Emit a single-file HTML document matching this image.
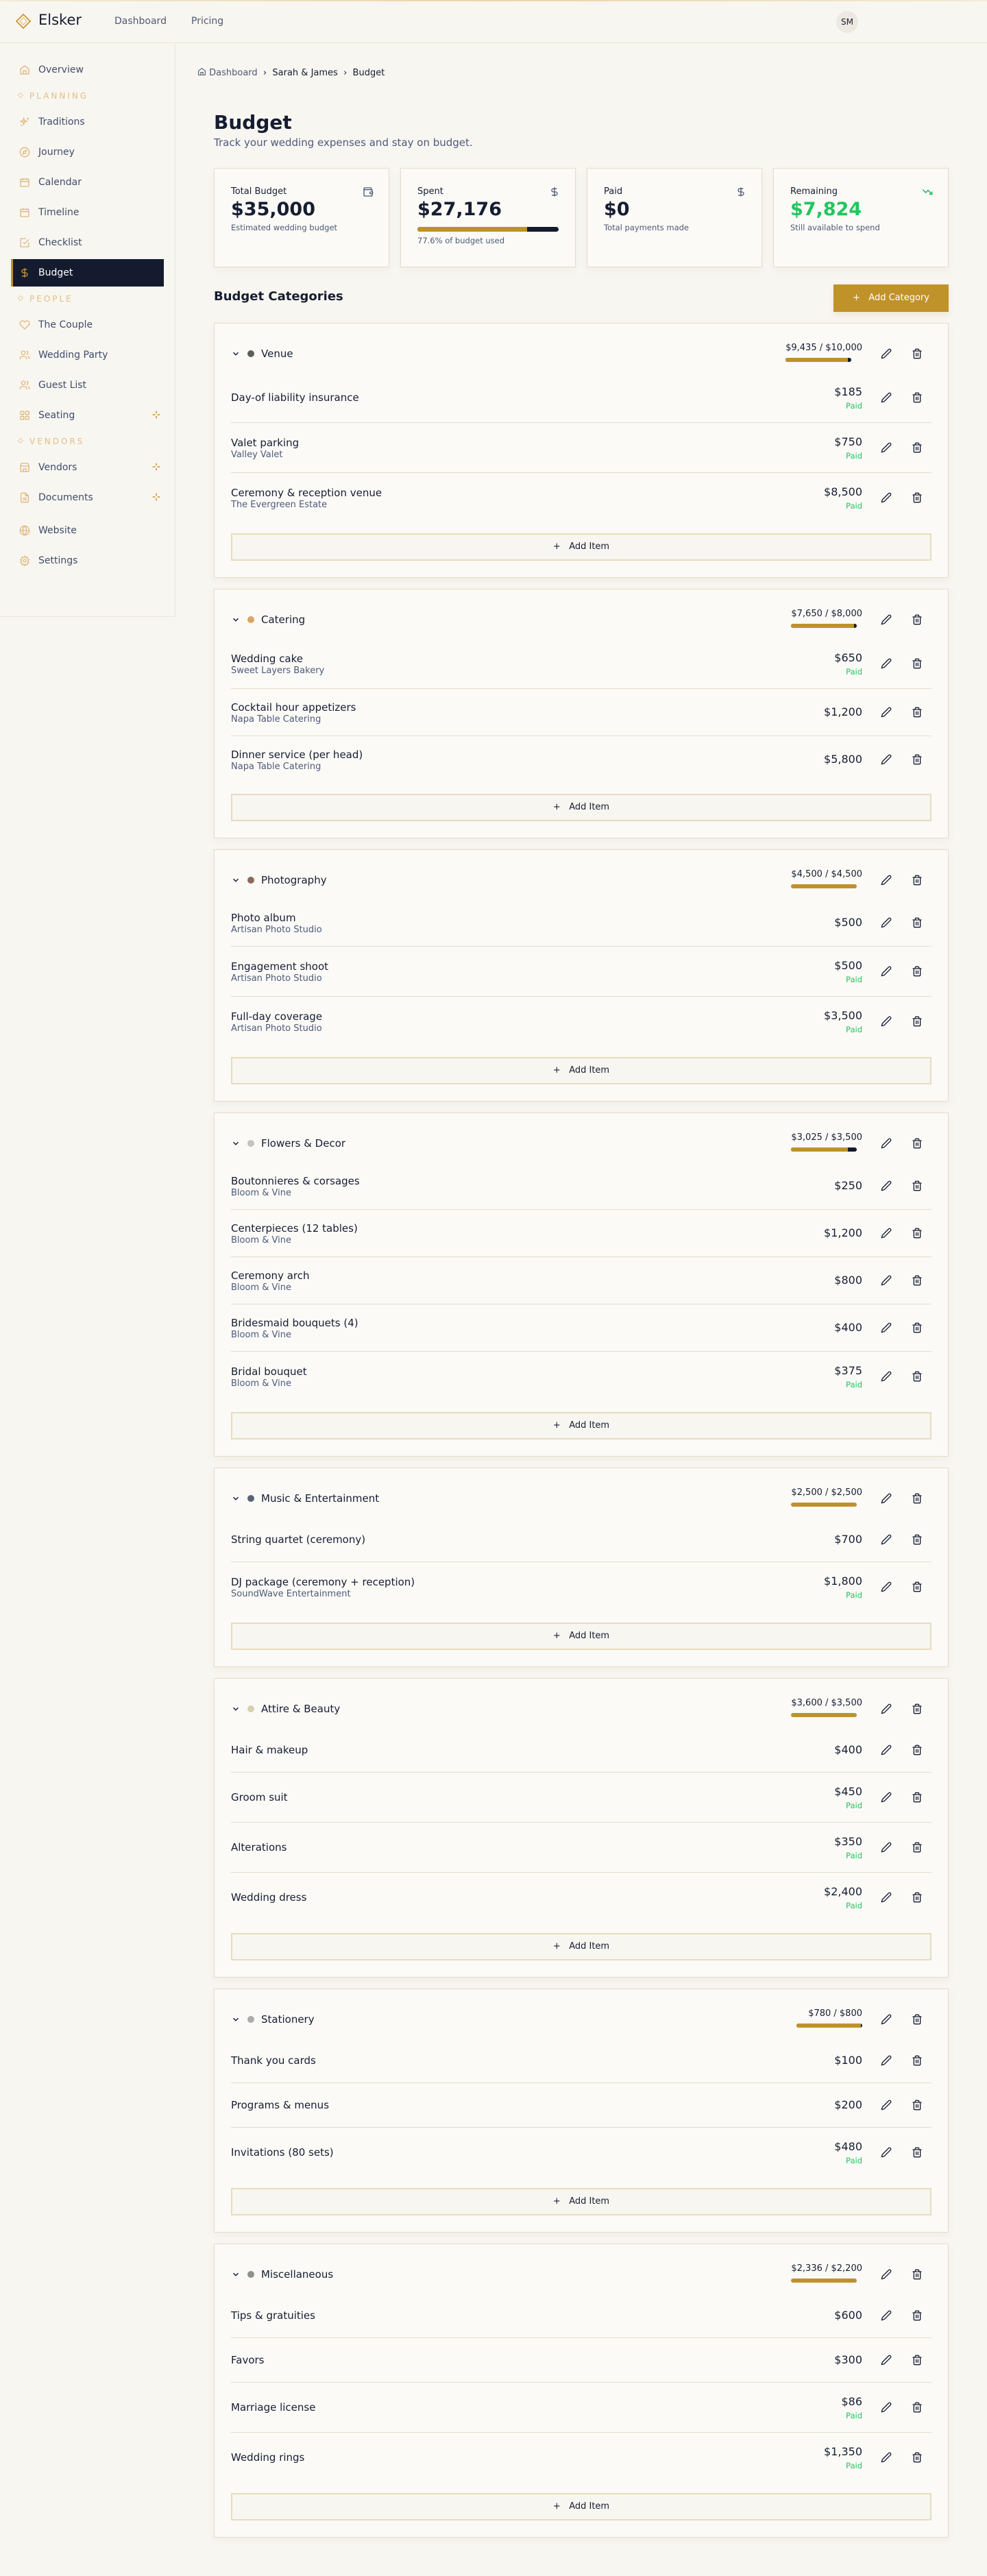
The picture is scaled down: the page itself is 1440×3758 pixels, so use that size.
<!DOCTYPE html>
<html><head><meta charset="utf-8"><style>
*{box-sizing:border-box;margin:0;padding:0}
body{width:1440px;height:3758px;background:#f8f6f1;font-family:"DejaVu Sans","Liberation Sans",sans-serif;color:#161d31;position:relative;overflow:hidden}
.topline{position:absolute;left:0;top:0;width:1440px;height:2px;background:linear-gradient(90deg,#f3ead6,#e9d6a8,#f3ead6)}
header{position:absolute;left:0;top:0;width:1440px;height:63px;border-bottom:1px solid #ebe4d4;background:#f8f6f1}
.logo{position:absolute;left:23px;top:20px}
.brand{position:absolute;left:56px;top:17px;font-size:21px;color:#161d31}
.nav{position:absolute;top:23px;font-size:14px;color:#4d5a72}
.avatar{position:absolute;left:1220px;top:16px;width:32px;height:32px;border-radius:50%;background:#ede9e1;font-size:12px;text-align:center;line-height:32px;color:#161d31}
aside{position:absolute;left:0;top:64px;width:256px;height:836px;border-right:1px solid #ece7dc;border-bottom:1px solid #ece7dc}
.it{position:absolute;left:16px;width:223px;height:40px;font-size:14px;color:#3f4d69;line-height:40px;padding-left:40px}
.it svg{position:absolute;left:12px;top:12px}
.it.act{background:#141b2e;color:#fff;border-left:3px solid #c0922a;padding-left:37px}
.it.act svg{left:9px}
.lbl{position:absolute;left:27px;font-size:12px;letter-spacing:3px;color:#e1bf85;line-height:16px}
.lbl b{display:inline-block;width:6px;height:6px;border:1px solid #e8cfa0;transform:rotate(45deg);margin-right:10px;vertical-align:2px}
.spark{position:absolute;left:205px;top:13px}
.crumb{position:absolute;left:288px;top:98px;font-size:13px;color:#161d31}
.crumb .g{color:#4d5a72}
h1{position:absolute;left:312px;top:162px;font-size:28px;font-weight:bold;color:#161d31}
.subt{position:absolute;left:312px;top:199px;font-size:15px;color:#4d5a7a}
.stat{position:absolute;top:245px;width:256px;height:145px;background:#fbfaf7;border:1px solid #e6dcc8;box-shadow:0 4px 10px rgba(120,100,60,.06);padding:24px}
.stat .l{font-size:13px;line-height:20px;color:#161d31}
.stat .v{font-size:27px;font-weight:bold;line-height:32px;margin-top:0}
.stat .s{font-size:11.5px;color:#4d5a72;line-height:16px;margin-top:2px}
.stat svg{position:absolute;right:22px;top:26px}
.bar{height:7px;border-radius:4px;background:#141b2e;overflow:hidden}
.bar i{display:block;height:100%;background:#bf9229}
h2{position:absolute;left:312px;top:422px;font-size:18px;font-weight:bold}
.addcat{position:absolute;left:1216px;top:415px;width:168px;height:40px;background:#c0922a;color:#fff;font-size:13px;line-height:40px;text-align:center;box-shadow:0 4px 8px rgba(192,146,42,.15)}
.cats{position:absolute;left:312px;top:471px;width:1072px}
.cat{background:#fbfaf7;border:1px solid #e6dcc8;box-shadow:0 4px 10px rgba(120,100,60,.06);padding:24px;margin-bottom:16px}
.ch{height:40px;display:flex;align-items:center;margin-bottom:8px}
.ch .chev{margin-right:10px}
.dot{width:10px;height:10px;border-radius:50%;margin-right:10px}
.ch .n{font-size:15px;flex:1}
.bud{text-align:right;font-size:13px;line-height:16px;margin-top:-4px}
.bud .bar{width:96px;height:6px;margin-top:6px}
.btns{display:flex;align-items:center;margin-left:19px;margin-right:5px}
.btn{width:32px;height:32px;display:flex;align-items:center;justify-content:center}
.btn+.btn{margin-left:13px}
.row{display:flex;align-items:center;padding:16px 0;border-bottom:1px solid #e6dccb;min-height:65px}
.row.last{border-bottom:none;min-height:64px}
.row .t{flex:1}
.row .tt{font-size:15px;line-height:22px}
.row .ss{font-size:13px;line-height:14px;color:#4d5a7a}
.amt{text-align:right}
.amt .a{font-size:16px;line-height:24px}
.amt .p{font-size:11.5px;line-height:16px;color:#22c55e}
.add{margin-top:16px;height:40px;border:2px solid #e8dcbd;background:#f8f6f1;text-align:center;line-height:36px;font-size:13px;color:#161d31}
</style></head><body>
<header>
<div class="topline"></div>
<svg class="logo" width="22" height="22" viewBox="0 0 22 22"><path d="M11 1L21 11 11 21 1 11Z" fill="none" stroke="#c9963a" stroke-width="1.8"/><path d="M11 6L16 11 11 16 6 11Z" fill="none" stroke="#e2bf7a" stroke-width="1.2"/></svg>
<div class="brand">Elsker</div>
<div class="nav" style="left:167px">Dashboard</div>
<div class="nav" style="left:279px">Pricing</div>
<div class="avatar">SM</div>
</header>
<aside>
<div class="it" style="top:18px"><svg width="16" height="16" viewBox="0 0 24 24" fill="none" stroke="#e0b77a" stroke-width="2"><path d="M3 10l9-7 9 7v11H3z"/><path d="M9 21v-7h6v7"/></svg>Overview</div>
<div class="lbl" style="top:68px"><b></b>PLANNING</div>
<div class="it" style="top:94px"><svg width="16" height="16" viewBox="0 0 24 24" fill="none" stroke="#e0b77a" stroke-width="2"><path d="M10 4l1.5 5 5 1.5-5 1.5L10 17l-1.5-5L3.5 10.5l5-1.5z"/><path d="M19 3v4M17 5h4M5 18v3M3.5 19.5h3"/></svg>Traditions</div>
<div class="it" style="top:138px"><svg width="16" height="16" viewBox="0 0 24 24" fill="none" stroke="#e0b77a" stroke-width="2"><circle cx="12" cy="12" r="10"/><path d="M16 8l-2 6-6 2 2-6z"/></svg>Journey</div>
<div class="it" style="top:182px"><svg width="16" height="16" viewBox="0 0 24 24" fill="none" stroke="#e0b77a" stroke-width="2"><rect x="3" y="5" width="18" height="16" rx="2"/><path d="M8 3v4M16 3v4M3 10h18M8 14h.01M12 14h.01M16 14h.01M8 18h.01M12 18h.01"/></svg>Calendar</div>
<div class="it" style="top:226px"><svg width="16" height="16" viewBox="0 0 24 24" fill="none" stroke="#e0b77a" stroke-width="2"><rect x="3" y="5" width="18" height="16" rx="2"/><path d="M8 3v4M16 3v4M3 10h18"/></svg>Timeline</div>
<div class="it" style="top:270px"><svg width="16" height="16" viewBox="0 0 24 24" fill="none" stroke="#e0b77a" stroke-width="2"><path d="M21 11v9a1 1 0 01-1 1H4a1 1 0 01-1-1V4a1 1 0 011-1h11"/><path d="M9 11l3 3 9-9"/></svg>Checklist</div>
<div class="it act" style="top:314px"><svg width="16" height="16" viewBox="0 0 24 24" fill="none" stroke="#c9963a" stroke-width="2"><path d="M12 2v20M17 5H9.5a3.5 3.5 0 000 7h5a3.5 3.5 0 010 7H6"/></svg>Budget</div>
<div class="lbl" style="top:364px"><b></b>PEOPLE</div>
<div class="it" style="top:390px"><svg width="16" height="16" viewBox="0 0 24 24" fill="none" stroke="#e0b77a" stroke-width="2"><path d="M20.8 4.6a5.5 5.5 0 00-7.8 0L12 5.7l-1-1.1a5.5 5.5 0 00-7.8 7.8L12 21l8.8-8.6a5.5 5.5 0 000-7.8z"/></svg>The Couple</div>
<div class="it" style="top:434px"><svg width="16" height="16" viewBox="0 0 24 24" fill="none" stroke="#e0b77a" stroke-width="2"><circle cx="9" cy="7" r="4"/><path d="M2 21v-2a4 4 0 014-4h6a4 4 0 014 4v2M16 3.1a4 4 0 010 7.8M22 21v-2a4 4 0 00-3-3.9"/></svg>Wedding Party</div>
<div class="it" style="top:478px"><svg width="16" height="16" viewBox="0 0 24 24" fill="none" stroke="#e0b77a" stroke-width="2"><circle cx="9" cy="7" r="4"/><path d="M2 21v-2a4 4 0 014-4h6a4 4 0 014 4v2M16 3.1a4 4 0 010 7.8M22 21v-2a4 4 0 00-3-3.9"/></svg>Guest List</div>
<div class="it" style="top:522px"><svg width="16" height="16" viewBox="0 0 24 24" fill="none" stroke="#e0b77a" stroke-width="2"><rect x="3" y="3" width="7" height="7" rx="1"/><rect x="14" y="3" width="7" height="7" rx="1"/><rect x="3" y="14" width="7" height="7" rx="1"/><rect x="14" y="14" width="7" height="7" rx="1"/></svg>Seating<svg class="spark" style="left:205px" width="14" height="14" viewBox="0 0 24 24" fill="none" stroke="#d49a45" stroke-width="3"><path d="M12 3v6M12 15v6M3 12h6M15 12h6"/></svg></div>
<div class="lbl" style="top:572px"><b></b>VENDORS</div>
<div class="it" style="top:598px"><svg width="16" height="16" viewBox="0 0 24 24" fill="none" stroke="#e0b77a" stroke-width="2"><path d="M3 9l2-6h14l2 6M3 9v12h18V9M3 9h18M9 21v-6h6v6"/></svg>Vendors<svg class="spark" style="left:205px" width="14" height="14" viewBox="0 0 24 24" fill="none" stroke="#d49a45" stroke-width="3"><path d="M12 3v6M12 15v6M3 12h6M15 12h6"/></svg></div>
<div class="it" style="top:642px"><svg width="16" height="16" viewBox="0 0 24 24" fill="none" stroke="#e0b77a" stroke-width="2"><path d="M14 2H6a2 2 0 00-2 2v16a2 2 0 002 2h12a2 2 0 002-2V8z"/><path d="M14 2v6h6M8 13h8M8 17h8"/></svg>Documents<svg class="spark" style="left:205px" width="14" height="14" viewBox="0 0 24 24" fill="none" stroke="#d49a45" stroke-width="3"><path d="M12 3v6M12 15v6M3 12h6M15 12h6"/></svg></div>
<div class="it" style="top:690px"><svg width="16" height="16" viewBox="0 0 24 24" fill="none" stroke="#e0b77a" stroke-width="2"><circle cx="12" cy="12" r="10"/><path d="M2 12h20M12 2a15 15 0 010 20M12 2a15 15 0 000 20"/></svg>Website</div>
<div class="it" style="top:734px"><svg width="16" height="16" viewBox="0 0 24 24" fill="none" stroke="#e0b77a" stroke-width="2"><circle cx="12" cy="12" r="3"/><path d="M12 2l2 3 3.5-1 .5 3.5 3 2-2 3 2 3-3 2-.5 3.5-3.5-1-2 3-2-3-3.5 1L6 17.5l-3-2 2-3-2-3 3-2L6.5 4 10 5z"/></svg>Settings</div>
</aside>

<div class="crumb"><svg width="13" height="13" viewBox="0 0 24 24" fill="none" stroke="#4d5a72" stroke-width="2" style="vertical-align:-1px"><path d="M3 10l9-7 9 7v11H3z"/><path d="M9 21v-7h6v7"/></svg> <span class="g">Dashboard</span> &nbsp;›&nbsp; Sarah &amp; James &nbsp;›&nbsp; Budget</div>
<h1>Budget</h1>
<div class="subt">Track your wedding expenses and stay on budget.</div>

<div class="stat" style="left:312px"><div class="l">Total Budget</div><div class="v">$35,000</div><div class="s">Estimated wedding budget</div><svg width="16" height="16" viewBox="0 0 24 24" fill="none" stroke="#4d5a72" stroke-width="2"><path d="M19 7V4a1 1 0 00-1-1H5a2 2 0 000 4h15a1 1 0 011 1v4h-3a2 2 0 000 4h3a1 1 0 001-1v-2a1 1 0 00-1-1M3 5v14a2 2 0 002 2h15a1 1 0 001-1v-4"/></svg></div>
<div class="stat" style="left:584px"><div class="l">Spent</div><div class="v">$27,176</div><div class="bar" style="margin-top:9px"><i style="width:77.6%"></i></div><div class="s" style="margin-top:5px">77.6% of budget used</div><svg width="16" height="16" viewBox="0 0 24 24" fill="none" stroke="#4d5a72" stroke-width="2"><path d="M12 2v20M17 5H9.5a3.5 3.5 0 000 7h5a3.5 3.5 0 010 7H6"/></svg></div>
<div class="stat" style="left:856px"><div class="l">Paid</div><div class="v">$0</div><div class="s">Total payments made</div><svg width="16" height="16" viewBox="0 0 24 24" fill="none" stroke="#4d5a72" stroke-width="2"><path d="M12 2v20M17 5H9.5a3.5 3.5 0 000 7h5a3.5 3.5 0 010 7H6"/></svg></div>
<div class="stat" style="left:1128px"><div class="l">Remaining</div><div class="v" style="color:#22c55e">$7,824</div><div class="s">Still available to spend</div><svg width="16" height="16" viewBox="0 0 24 24" fill="none" stroke="#22c55e" stroke-width="2.5"><path d="M22 17l-8.5-8.5-5 5L2 7"/><path d="M16 17h6v-6"/></svg></div>

<h2>Budget Categories</h2>
<div class="addcat">+&nbsp;&nbsp; Add Category</div>

<div class="cats" id="cats"></div>
<script>
var P='<svg width="16" height="16" viewBox="0 0 24 24" fill="none" stroke="#161d31" stroke-width="2" stroke-linecap="round" stroke-linejoin="round"><path d="M17 3a2.85 2.85 0 114 4L7.5 20.5 2 22l1.5-5.5z"/></svg>';
var T='<svg width="16" height="16" viewBox="0 0 24 24" fill="none" stroke="#161d31" stroke-width="2" stroke-linecap="round" stroke-linejoin="round"><path d="M3 6h18M19 6v14a2 2 0 01-2 2H7a2 2 0 01-2-2V6M8 6V4a2 2 0 012-2h4a2 2 0 012 2v2M10 11v6M14 11v6"/></svg>';
var B='<div class="btns"><div class="btn">'+P+'</div><div class="btn">'+T+'</div></div>';
var C='<svg class="chev" width="14" height="14" viewBox="0 0 24 24" fill="none" stroke="#161d31" stroke-width="2.5"><path d="M6 9l6 6 6-6"/></svg>';
var data=[
["Venue","#5d5f5c","$9,435 / $10,000",94.35,[["Day-of liability insurance","","$185",1],["Valet parking","Valley Valet","$750",1],["Ceremony & reception venue","The Evergreen Estate","$8,500",1]]],
["Catering","#d7a565","$7,650 / $8,000",95.6,[["Wedding cake","Sweet Layers Bakery","$650",1],["Cocktail hour appetizers","Napa Table Catering","$1,200",0],["Dinner service (per head)","Napa Table Catering","$5,800",0]]],
["Photography","#8a6a58","$4,500 / $4,500",100,[["Photo album","Artisan Photo Studio","$500",0],["Engagement shoot","Artisan Photo Studio","$500",1],["Full-day coverage","Artisan Photo Studio","$3,500",1]]],
["Flowers & Decor","#c3c4bc","$3,025 / $3,500",86.4,[["Boutonnieres & corsages","Bloom & Vine","$250",0],["Centerpieces (12 tables)","Bloom & Vine","$1,200",0],["Ceremony arch","Bloom & Vine","$800",0],["Bridesmaid bouquets (4)","Bloom & Vine","$400",0],["Bridal bouquet","Bloom & Vine","$375",1]]],
["Music & Entertainment","#5a6478","$2,500 / $2,500",100,[["String quartet (ceremony)","","$700",0],["DJ package (ceremony + reception)","SoundWave Entertainment","$1,800",1]]],
["Attire & Beauty","#d8cfb0","$3,600 / $3,500",100,[["Hair & makeup","","$400",0],["Groom suit","","$450",1],["Alterations","","$350",1],["Wedding dress","","$2,400",1]]],
["Stationery","#a9aca9","$780 / $800",97.5,[["Thank you cards","","$100",0],["Programs & menus","","$200",0],["Invitations (80 sets)","","$480",1]]],
["Miscellaneous","#8f918e","$2,336 / $2,200",100,[["Tips & gratuities","","$600",0],["Favors","","$300",0],["Marriage license","","$86",1],["Wedding rings","","$1,350",1]]]
];
function e(s){return s.replace(/&/g,'&amp;')}
var h='';
data.forEach(function(c){
h+='<div class="cat"><div class="ch">'+C+'<div class="dot" style="background:'+c[1]+'"></div><div class="n">'+e(c[0])+'</div><div class="bud">'+c[2]+'<div class="bar"><i style="width:'+c[3]+'%"></i></div></div>'+B+'</div>';
c[4].forEach(function(r,i){
h+='<div class="row'+(i==c[4].length-1?' last':'')+'"><div class="t"><div class="tt">'+e(r[0])+'</div>'+(r[1]?'<div class="ss">'+e(r[1])+'</div>':'')+'</div><div class="amt"><div class="a">'+r[2]+'</div>'+(r[3]?'<div class="p">Paid</div>':'')+'</div>'+B+'</div>';
});
h+='<div class="add">+&nbsp;&nbsp; Add Item</div></div>';
});
document.getElementById('cats').innerHTML=h;
</script>
</body></html>
